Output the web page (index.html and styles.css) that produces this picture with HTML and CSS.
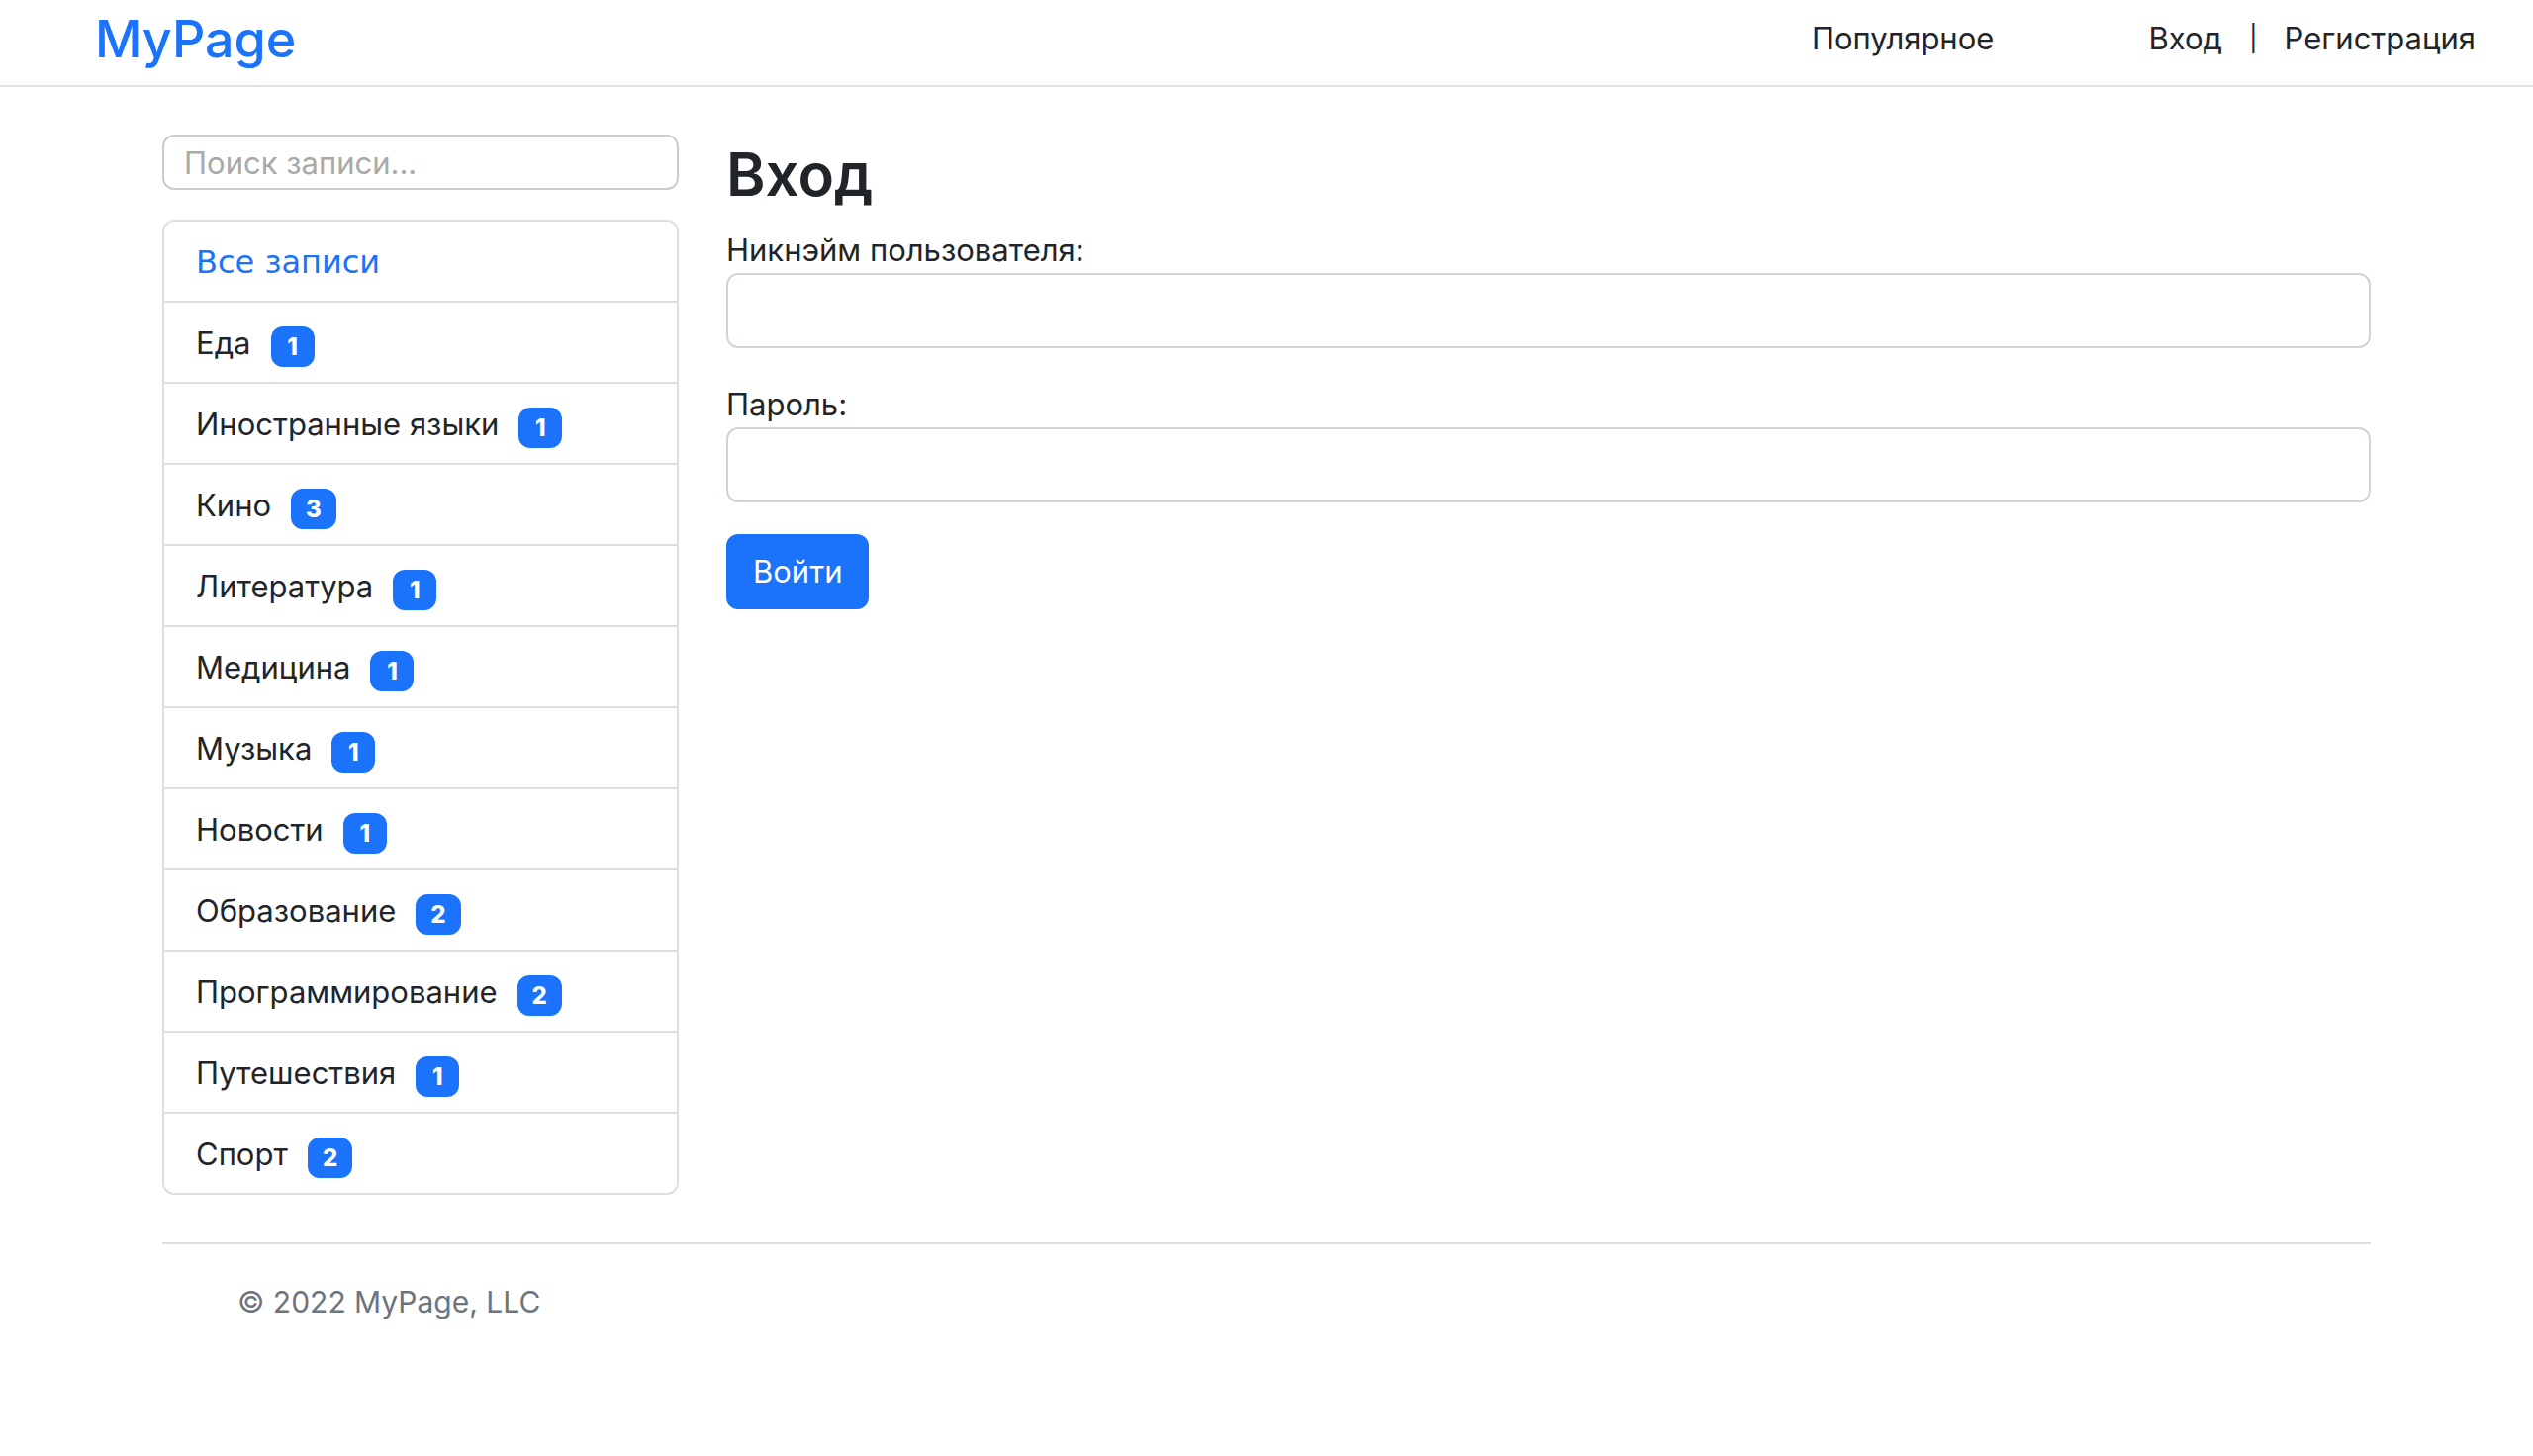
FILE: index.html
```html
<!DOCTYPE html>
<html lang="ru">
<head>
<meta charset="utf-8">
<meta name="viewport" content="width=device-width, initial-scale=1">
<title>MyPage — Вход</title>
<link rel="stylesheet" href="styles.css">
</head>
<body>
<header class="topbar">
  <a class="brand" href="#">MyPage</a>
  <nav class="nav">
    <a class="nav-popular" href="#">Популярное</a>
    <a href="#">Вход</a>
    <span class="nav-divider">|</span>
    <a href="#">Регистрация</a>
  </nav>
</header>
<div class="container">
  <div class="row">
    <aside class="sidebar">
      <form class="search-form">
        <input class="search" type="search" placeholder="Поиск записи..." aria-label="Поиск записи">
      </form>
      <ul class="categories">
        <li><a class="all" href="#">Все записи</a></li>
        <li><a href="#">Еда</a><span class="badge">1</span></li>
        <li><a href="#">Иностранные языки</a><span class="badge">1</span></li>
        <li><a href="#">Кино</a><span class="badge">3</span></li>
        <li><a href="#">Литература</a><span class="badge">1</span></li>
        <li><a href="#">Медицина</a><span class="badge">1</span></li>
        <li><a href="#">Музыка</a><span class="badge">1</span></li>
        <li><a href="#">Новости</a><span class="badge">1</span></li>
        <li><a href="#">Образование</a><span class="badge">2</span></li>
        <li><a href="#">Программирование</a><span class="badge">2</span></li>
        <li><a href="#">Путешествия</a><span class="badge">1</span></li>
        <li><a href="#">Спорт</a><span class="badge">2</span></li>
      </ul>
    </aside>
    <main class="content">
      <h1>Вход</h1>
      <form class="login">
        <div class="field">
          <label for="username">Никнэйм пользователя:</label>
          <input id="username" type="text">
        </div>
        <div class="field">
          <label for="password">Пароль:</label>
          <input id="password" type="password">
        </div>
        <button class="submit" type="button">Войти</button>
      </form>
    </main>
  </div>
  <footer class="footer">
    <p>© 2022 MyPage, LLC</p>
  </footer>
</div>
</body>
</html>
```
FILE: styles.css
```css
* {
  box-sizing: border-box;
}

body {
  margin: 0;
  background: #fff;
  color: #212529;
  font: 400 31px/48px Inter, "Liberation Sans", sans-serif;
}

a {
  color: inherit;
  text-decoration: none;
}

input,
button {
  font: inherit;
}

.topbar {
  display: flex;
  align-items: flex-start;
  justify-content: space-between;
  padding: 0 58px 6px 96px;
  border-bottom: 2px solid #dee2e6;
}

.brand {
  color: #1b72fb;
  font-size: 52px;
  font-weight: 500;
  line-height: 80px;
}

.nav {
  display: flex;
  padding-top: 15px;
}

.nav-popular {
  margin-right: 156px;
}

.nav-divider {
  margin: 0 27px;
  font-size: 26px;
}

.container {
  padding: 48px 140px 0;
}

.row {
  display: flex;
}

.sidebar {
  width: 25%;
  padding: 0 24px;
}

.content {
  width: 75%;
  padding: 0 24px;
}

.search {
  display: block;
  width: 100%;
  height: 56px;
  padding: 0 20px;
  border: 2px solid #ccc;
  border-radius: 12px;
  background: #fff;
  appearance: none;
}

.search::placeholder {
  color: #a9a9a9;
  opacity: 1;
}

.categories {
  margin: 30px 0 0;
  padding: 0;
  list-style: none;
  border: 2px solid #dfdfdf;
  border-radius: 12px;
}

.categories li {
  display: flex;
  padding: 17px 32px 15px;
}

.categories li + li {
  border-top: 2px solid #dfdfdf;
}

.categories .all {
  color: #1b72fb;
  font-family: "DejaVu Sans", Verdana, sans-serif;
  font-size: 32px;
}

.badge {
  min-width: 44px;
  margin: 7px 0 0 20px;
  padding: 0 15px;
  border-radius: 12px;
  background: #1b72fb;
  color: #fff;
  font-size: 24px;
  font-weight: 800;
  line-height: 41px;
  text-align: center;
}

h1 {
  margin: 0 0 12px;
  font-size: 60px;
  font-weight: 600;
  line-height: 80px;
}

.field {
  margin-bottom: 32px;
}

.field label {
  display: block;
  padding-top: 2px;
  line-height: 46px;
}

.field input {
  display: block;
  width: 100%;
  height: 76px;
  padding: 12px 24px;
  border: 2px solid #ced4da;
  border-radius: 12px;
  background: #fff;
}

.submit {
  height: 76px;
  padding: 0 27px;
  border: 0;
  border-radius: 12px;
  background: #1b72fb;
  color: #fff;
}

.footer {
  margin: 48px 24px 0;
  padding: 34px 76px 48px;
  border-top: 2px solid #dfdfdf;
  color: #6c757d;
  font-size: 30px;
}

.footer p {
  margin: 0;
}
```
